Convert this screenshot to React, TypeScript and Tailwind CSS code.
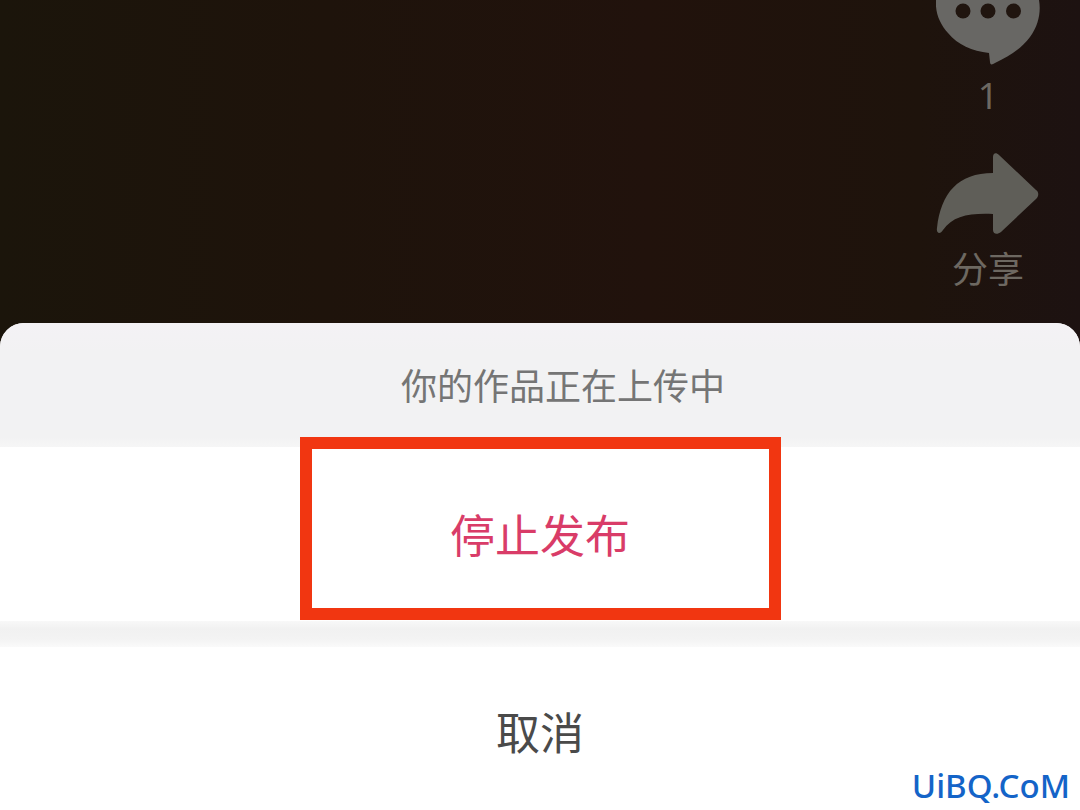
interface RailButtonProps {
  label: string
  name: string
  children: React.ReactNode
}

function RailButton({ label, name, children }: RailButtonProps) {
  return (
    <button type="button" aria-label={name} className="flex w-[104px] flex-col items-center">
      {children}
      <span className="mt-2 text-[36px] leading-[46px]">{label}</span>
    </button>
  )
}

function CommentIcon() {
  return (
    <svg viewBox="0 0 104 65" className="h-[65px] w-[104px]" aria-hidden="true">
      <path
        d="M0 0C-1 13 4 24 12 33C22 45 36 51 53 53L54 62C54 65 56 65 59 63C74 56 86 48 94 37C103 25 105 11 103 0Z"
        fill="#686764"
      />
      <circle cx="27" cy="11" r="7.5" fill="#20150f" />
      <circle cx="52" cy="11" r="7.5" fill="#20150f" />
      <circle cx="77.5" cy="11" r="7.5" fill="#20150f" />
    </svg>
  )
}

function ShareIcon() {
  return (
    <svg viewBox="0 0 104 86" className="h-[86px] w-[104px]" aria-hidden="true">
      <path
        d="M57 20V4C57 0 60 -1 63 2L100 37C103 39 103 43 100 46L65 79C61 82 57 81 57 77V61C33 60 17 63 7 77C4 82 0 80 1 75C5 40 22 20 57 20Z"
        fill="#5f5e58"
      />
    </svg>
  )
}

export default function App() {
  return (
    <div className="relative flex min-h-screen flex-col bg-[linear-gradient(90deg,#1b150b_0%,#1e130b_30%,#21120c_60%,#1e130c_85%,#1d1211_100%)] font-['Noto_Sans','Noto_Sans_CJK_SC',sans-serif]">
      <div className="flex flex-col items-end gap-[34px] pr-[40px] pb-[30px] text-[#6d6861]">
        <RailButton label="1" name="评论 1">
          <CommentIcon />
        </RailButton>
        <RailButton label="分享" name="分享">
          <ShareIcon />
        </RailButton>
      </div>

      <div role="dialog" aria-labelledby="upload-title" className="flex grow flex-col rounded-t-3xl bg-white">
        <div className="flex h-[124px] items-center justify-center rounded-t-3xl bg-[linear-gradient(#f4f2f5,#f2f2f3_28px,#f2f2f3_114px,#f6f6f6)] pt-1 pl-[46px]">
          <h1 id="upload-title" className="text-[36px] leading-[48px] text-[#757575]">
            你的作品正在上传中
          </h1>
        </div>

        <div className="relative">
          <button type="button" className="h-[174px] w-full pt-1 text-[45px] text-[#d93c68]">
            停止发布
          </button>
          {/* highlight frame */}
          <div className="pointer-events-none absolute inset-x-0 -top-[10px] bottom-px mx-auto w-[481px] border-[12px] border-[#f13611]" />
        </div>

        <div className="h-[26px] bg-[linear-gradient(#f8f8f8,#f1f1f1_8px,#f3f3f3_18px,#fafafa)]" />

        <button type="button" className="grow pt-2 text-[44px] text-[#4a4a4a]">
          取消
        </button>
      </div>

      <a href="#" className="absolute right-[10px] bottom-0 text-[33px] leading-[48px] font-medium text-[#1464c8]">
        UiBQ.CoM
      </a>
    </div>
  )
}
